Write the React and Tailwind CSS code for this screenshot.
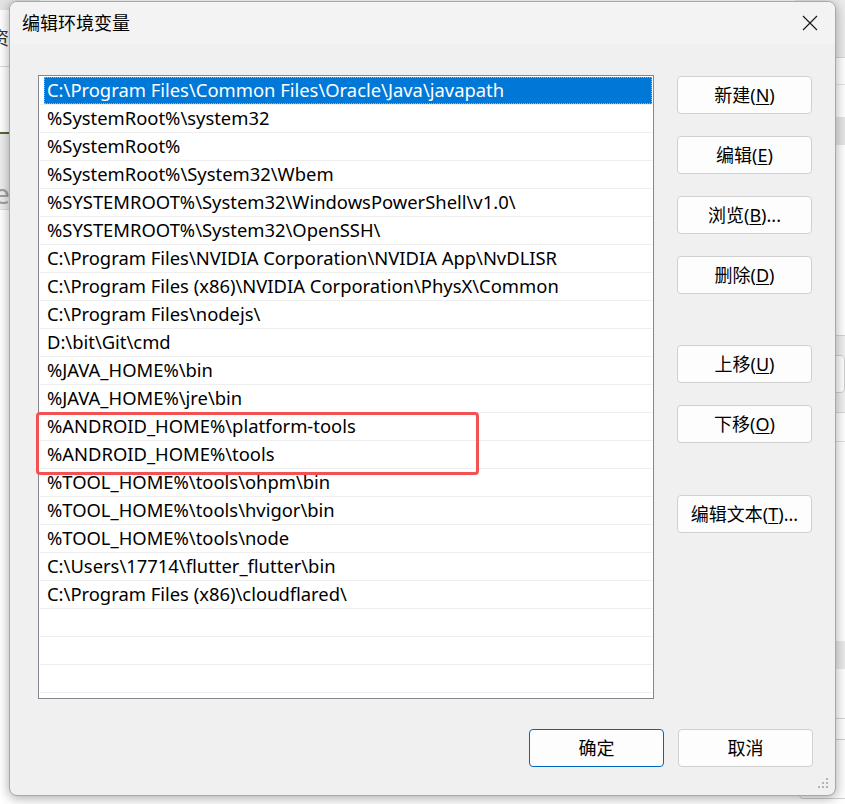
import React from 'react'

const FONT = '"Noto Sans", "Noto Sans CJK SC", sans-serif'

const paths = [
  'C:\\Program Files\\Common Files\\Oracle\\Java\\javapath',
  '%SystemRoot%\\system32',
  '%SystemRoot%',
  '%SystemRoot%\\System32\\Wbem',
  '%SYSTEMROOT%\\System32\\WindowsPowerShell\\v1.0\\',
  '%SYSTEMROOT%\\System32\\OpenSSH\\',
  'C:\\Program Files\\NVIDIA Corporation\\NVIDIA App\\NvDLISR',
  'C:\\Program Files (x86)\\NVIDIA Corporation\\PhysX\\Common',
  'C:\\Program Files\\nodejs\\',
  'D:\\bit\\Git\\cmd',
  '%JAVA_HOME%\\bin',
  '%JAVA_HOME%\\jre\\bin',
  '%ANDROID_HOME%\\platform-tools',
  '%ANDROID_HOME%\\tools',
  '%TOOL_HOME%\\tools\\ohpm\\bin',
  '%TOOL_HOME%\\tools\\hvigor\\bin',
  '%TOOL_HOME%\\tools\\node',
  'C:\\Users\\17714\\flutter_flutter\\bin',
  'C:\\Program Files (x86)\\cloudflared\\',
  '',
  '',
  '',
]

const sideButtons = [
  { label: '新建', key: 'N', mt: 'mt-0' },
  { label: '编辑', key: 'E', mt: 'mt-[22px]' },
  { label: '浏览', key: 'B', dots: true, mt: 'mt-[22px]' },
  { label: '删除', key: 'D', mt: 'mt-[22px]' },
  { label: '上移', key: 'U', mt: 'mt-[51px]' },
  { label: '下移', key: 'O', mt: 'mt-[22px]' },
  { label: '编辑文本', key: 'T', dots: true, mt: 'mt-[52px]' },
]

function WinButton({ children, primary, className = '' }) {
  return (
    <button
      className={`h-[38px] w-[135px] rounded-[4px] border bg-[#fdfdfd] text-[18px] text-black flex items-center justify-center ${
        primary ? 'border-[#0067c0]' : 'border-[#d0d0d0]'
      } ${className}`}
    >
      {children}
    </button>
  )
}

function BackdropLeft() {
  return (
    <div className="w-[40px] h-full bg-white flex flex-col overflow-hidden text-[18px] text-[#333]">
      <div className="h-[10px] bg-[#e4e4e4]" />
      <div className="h-[57px] flex items-center -ml-[9px] border-b border-[#dadada]">资源</div>
      <div className="h-[65px] bg-white" />
      <div className="h-[2px] bg-[#506a34]" />
      <div className="h-[76px] bg-[#ededed] flex items-end pb-[2px] text-[28px] text-[#a0a0a0] -ml-[6px] leading-none border-b border-[#dcdcdc]">
        e
      </div>
      <div className="flex-1 bg-white" />
    </div>
  )
}

function BackdropRight() {
  const line = 'h-[28px] flex items-center pl-[2px]'
  return (
    <div className="flex-1 h-full bg-white flex flex-col overflow-hidden text-[18px] text-black">
      <div className="h-[58px] bg-[#ebebeb] border-b border-[#d6d6d6]" />
      <div className="h-[27px] border-b border-[#e2e2e2]" />
      <div className="h-[32px]" />
      <div className={`${line} bg-[#e6e6e6]`}>B3</div>
      <div className={line}>de</div>
      <div className="h-[27px]" />
      <div className={line}>u</div>
      <div className={line}>D</div>
      <div className={line}>D</div>
      <div className={line}>D</div>
      <div className="h-[24px] flex items-start pl-[2px] overflow-hidden border-b border-[#d4d4d4]">n</div>
      <div className="h-[77px] bg-[#f0f0f0] border-b border-[#d8d8d8] flex items-center pl-[8px]">
        <div className="h-[38px] w-[60px] rounded-[4px] border border-[#cfcfcf] bg-[#fdfdfd]" />
      </div>
      <div className="h-[29px] border-b border-[#e0e0e0]" />
      <div className="h-[60px]" />
      <div className={line}>M</div>
      <div className={line}>a\</div>
      <div className={line}>5)</div>
      <div className="h-[55px]" />
      <div className={`${line} bg-[#eaeaea]`}>m</div>
      <div className={line}>D;</div>
      <div className="h-[22px] border-b border-[#d4d4d4]" />
      <div className="h-[20px]" />
      <div className="ml-[4px] h-[60px] w-[60px] rounded-[4px] border border-[#cfcfcf] bg-[#fdfdfd]" />
    </div>
  )
}

export default function App() {
  return (
    <div className="relative w-[845px] h-[804px] overflow-hidden bg-white" style={{ fontFamily: FONT }}>
      <div className="flex w-full h-full">
        <BackdropLeft />
        <div className="w-[755px]" />
        <BackdropRight />
      </div>

      {/* dialog window */}
      <div className="absolute left-[9px] top-[1px] w-[827px] h-[795px] rounded-[8px] bg-[#f0f0f0] border border-[#a8a8a8] shadow-[0_2px_12px_rgba(0,0,0,0.35)] flex flex-col overflow-hidden">
        <div className="h-[42px] bg-[#f3f3f3] flex items-center justify-between pl-[12px] pr-[16px] shrink-0">
          <span className="text-[18px] text-black">编辑环境变量</span>
          <svg width="16" height="16" viewBox="0 0 16 16" className="mr-[1px]">
            <path d="M1 1 L15 15 M15 1 L1 15" stroke="#1a1a1a" strokeWidth="1.2" fill="none" />
          </svg>
        </div>

        <div className="flex-1 flex flex-col pl-[28px] pr-[22px] pt-[31px]">
          <div className="flex">
            {/* list */}
            <div className="relative w-[616px] h-[624px] bg-white border border-[#828790] shrink-0">
              <div className="flex flex-col pt-[1px] pl-[1px] pr-[1px] overflow-hidden h-full">
                {paths.map((p, i) => (
                  <div key={i} className="h-[28px] border-b border-[#efefef] shrink-0 flex">
                    {i === 0 ? (
                      <div className="ml-[4px] flex-1 bg-[#0078d7] text-white text-[18.4px] flex items-center pl-[3px] pb-[2px] outline-1 outline-dotted outline-[#f2a23a] -outline-offset-1 whitespace-nowrap">
                        {p}
                      </div>
                    ) : (
                      <div className="pl-[7px] pb-[2px] text-[18.4px] text-black flex items-center whitespace-nowrap">{p}</div>
                    )}
                  </div>
                ))}
              </div>
              {/* red annotation box */}
              <div className="absolute left-[-3px] top-[336px] w-[443px] h-[63px] border-[3px] border-[#f45252] rounded-[4px]" />
            </div>

            {/* side buttons */}
            <div className="ml-[23px] flex flex-col pt-[1px]">
              {sideButtons.map((b) => (
                <WinButton key={b.key} className={b.mt}>
                  {b.label}(<u className="underline-offset-2">{b.key}</u>){b.dots ? '...' : ''}
                </WinButton>
              ))}
            </div>
          </div>

          <div className="flex justify-end gap-[14px] mt-[30px]">
            <WinButton primary>确定</WinButton>
            <WinButton>取消</WinButton>
          </div>
        </div>

        {/* size grip */}
        <svg width="12" height="12" viewBox="0 0 12 12" className="absolute right-[6px] bottom-[6px]">
          <g fill="#b4b4b4">
            <rect x="9" y="1" width="2" height="2" />
            <rect x="5" y="5" width="2" height="2" />
            <rect x="9" y="5" width="2" height="2" />
            <rect x="1" y="9" width="2" height="2" />
            <rect x="5" y="9" width="2" height="2" />
            <rect x="9" y="9" width="2" height="2" />
          </g>
        </svg>
      </div>
    </div>
  )
}
